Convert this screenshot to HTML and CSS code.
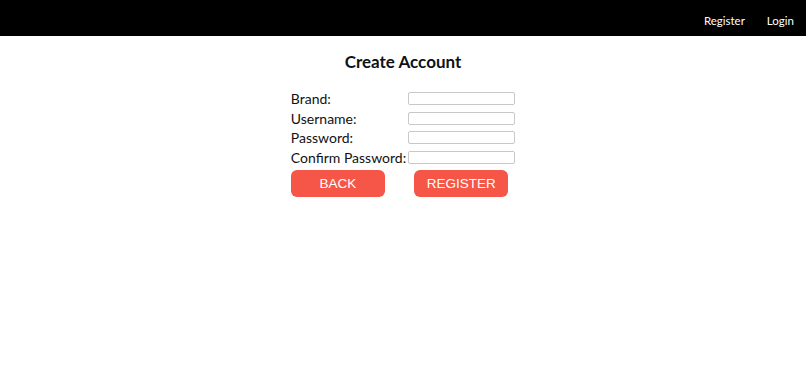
FILE: index.html
```html
<!DOCTYPE html>
<html lang="en">
  <head>
    <meta charset="UTF-8" />
    <meta name="viewport" content="width=device-width, initial-scale=1.0" />
    <title>Create Account</title>
    <link rel="stylesheet" href="styles.css">
  </head>
  <body>
    <nav class="topbar">
      <a href="#">Register</a>
      <a href="#">Login</a>
    </nav>
    <div class="content">
      <h1>Create Account</h1>
      <table class="form-table">
        <tr>
          <td>Brand:</td>
          <td><input type="text"></td>
        </tr>
        <tr>
          <td>Username:</td>
          <td><input type="text"></td>
        </tr>
        <tr>
          <td>Password:</td>
          <td><input type="password"></td>
        </tr>
        <tr>
          <td>Confirm Password:</td>
          <td><input type="password"></td>
        </tr>
        <tr>
          <td><button class="btn">BACK</button></td>
          <td><button class="btn btn-right">REGISTER</button></td>
        </tr>
      </table>
    </div>
  </body>
</html>
```

FILE: styles.css
```css
body{
    margin: 0;
    font-family: Lato, sans-serif;
    background: #fff;
    color: #111;
}
.topbar{
    height: 36px;
    box-sizing: border-box;
    background: #000;
    display: flex;
    justify-content: flex-end;
    align-items: center;
    padding: 5px 12px 0 0;
    gap: 22px;
}
.topbar a{
    color: #fff;
    text-decoration: none;
    font-size: 11.5px;
}
.content{
    display: flex;
    flex-direction: column;
    align-items: center;
}
h1{
    font-size: 17px;
    margin: 15px 0 17px;
    font-weight: bold;
}
.form-table{
    border-collapse: collapse;
    font-size: 14px;
}
.form-table td{
    padding: 0;
    height: 19.5px;
    vertical-align: middle;
}
.form-table td:first-child{
    padding-right: 2px;
}
input{
    box-sizing: border-box;
    width: 107px;
    height: 13px;
    border: 1px solid #c8c8c8;
    border-radius: 2px;
    padding: 0;
    display: block;
}
.btn{
    margin-top: 3px;
    width: 94px;
    height: 27px;
    background: #f55647;
    color: #fff;
    border: none;
    border-radius: 6px;
    font-family: "Liberation Sans", Arial, sans-serif;
    font-size: 13.5px;
    cursor: pointer;
}
.btn-right{
    margin-left: 6px;
}
```
